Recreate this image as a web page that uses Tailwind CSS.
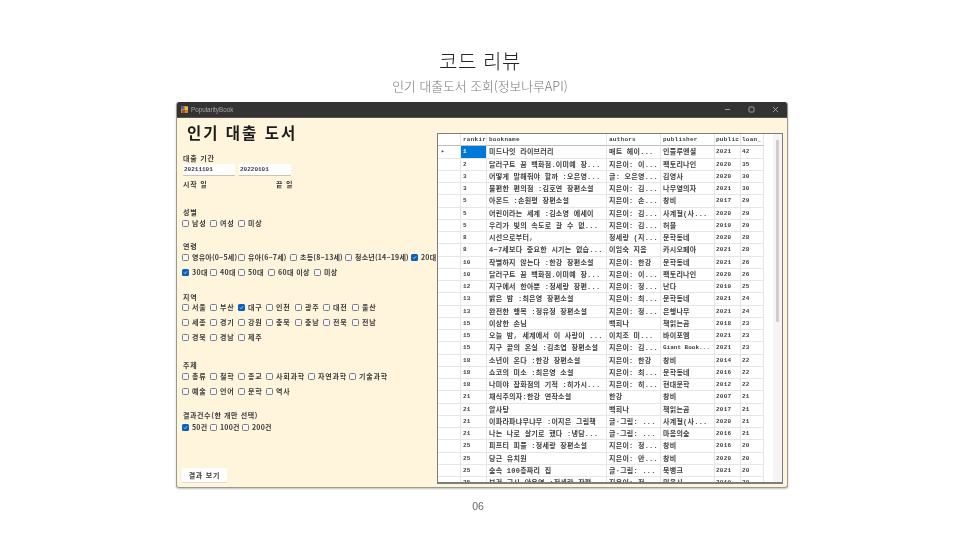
<!doctype html>
<html lang="ko">
<head>
<meta charset="utf-8">
<script src="https://cdn.jsdelivr.net/npm/@tailwindcss/browser@4"></script>
</head>
<body class="m-0 bg-white">
<div class="w-[960px] h-[540px] overflow-hidden flex flex-col items-center font-['Noto_Sans_CJK_KR','Liberation_Sans',sans-serif]">
  <h1 class="mt-[47px] h-[27px] leading-[27px] text-[20px] font-light text-[#222] tracking-[0.6px] opacity-[0.99]">코드 리뷰</h1>
  <p class="mt-[3px] h-[18px] leading-[18px] text-[12.8px] font-light text-[#777] opacity-[0.99]">인기 대출도서 조회(정보나루API)</p>

  <div class="mt-[7px] self-start ml-[176px] w-[612px] h-[386px] shrink-0 rounded-[3px] border border-[#9a9a8e] border-t-0 bg-[#fff5dc] overflow-hidden flex flex-col blur-[0.4px] shadow-[0_1px_2px_rgba(0,0,0,0.25)]">
    <!-- title bar -->
    <div class="h-[16px] shrink-0 bg-[#333333] border-b border-[#555] flex items-center text-[6.3px] text-[#a8a8a8] font-['Liberation_Sans',sans-serif]">
      <svg class="ml-[4px] mr-[3px]" width="7" height="7" viewBox="0 0 7 7"><rect width="7" height="7" fill="#c98a2a"/><rect x="0" y="0" width="3" height="3" fill="#3f6fb5"/><rect x="4" y="1" width="3" height="3" fill="#e8c040"/><rect x="1" y="4" width="3" height="3" fill="#b8482c"/></svg>
      <span>PopularityBook</span>
      <span class="ml-auto flex items-center gap-[17px] mr-[8px]">
        <svg width="7" height="7" viewBox="0 0 7 7"><path d="M1 3.5h5" stroke="#b5b5b5" stroke-width="0.8"/></svg>
        <svg width="7" height="7" viewBox="0 0 7 7"><rect x="1" y="1" width="5" height="5" rx="0.6" fill="none" stroke="#b5b5b5" stroke-width="0.8"/></svg>
        <svg width="7" height="7" viewBox="0 0 7 7"><path d="M1 1l5 5M6 1l-5 5" stroke="#b5b5b5" stroke-width="0.8"/></svg>
      </span>
    </div>

    <div class="flex-1 flex min-h-0">
      <!-- left form -->
      <div class="w-[260px] shrink-0 pl-[5px] flex flex-col whitespace-nowrap text-[#3a3a3a] text-[7px] leading-[10px] tracking-[0.8px] font-bold [&>div]:shrink-0 [&>div]:h-[10px] [&>div]:flex [&>div]:items-center [&_span]:shrink-0 [&_i]:shrink-0 [&_i]:w-[7px] [&_i]:h-[7px] [&_i]:mr-[3px] [&_i]:rounded-[1.5px] [&_i]:border-[0.8px] [&_i]:border-[#7c7c7c] [&_i]:bg-[#f7f7f7] [&_b]:shrink-0 [&_b]:w-[7px] [&_b]:h-[7px] [&_b]:mr-[3px] [&_b]:rounded-[1.5px] [&_b]:bg-[#0a62b8] [&_b]:flex [&_b]:items-center [&_b]:justify-center">
        <h2 class="mt-[5px] ml-[5px] h-[19px] leading-[19px] text-[15.5px] font-bold text-[#1c1c1c] tracking-[2px]">인기 대출 도서</h2>
        <div class="mt-[11px] pl-[1px]">대출 기간</div>
        <div class="mt-[1px] !h-[12px] pl-[1px] gap-[4px] font-['Liberation_Mono',monospace] text-[6px] tracking-[0] font-bold">
          <span class="w-[52px] h-[12px] bg-white border-b border-[#c9c4b4] pl-[1px] leading-[11px]">20211101</span>
          <span class="w-[52px] h-[12px] bg-white border-b border-[#c9c4b4] pl-[1px] leading-[11px]">20220101</span>
        </div>
        <div class="mt-[3px] pl-[1px]"><span class="w-[93px]">시작 일</span><span>끝 일</span></div>

        <div class="mt-[18px] pl-[1px]">성별</div>
        <div class="mt-[1px]">
          <span class="w-[28px] flex items-center"><i></i>남성</span><span class="w-[28px] flex items-center"><i></i>여성</span><span class="flex items-center"><i></i>미상</span>
        </div>

        <div class="mt-[13px] pl-[1px]">연령</div>
        <div class="mt-[1px] tracking-[0.2px]">
          <span class="w-[56px] flex items-center overflow-hidden"><i></i>영유아(0~5세)</span><span class="w-[52px] flex items-center overflow-hidden"><i></i>유아(6~7세)</span><span class="w-[55px] flex items-center overflow-hidden"><i></i>초등(8~13세)</span><span class="w-[66px] flex items-center overflow-hidden"><i></i>청소년(14~19세)</span><span class="flex items-center"><b><svg width="5" height="5" viewBox="0 0 5 5"><path d="M1 2.6l1 1 2-2.2" fill="none" stroke="#fff" stroke-width="0.7"/></svg></b>20대</span>
        </div>
        <div class="mt-[5px] tracking-[0.4px]">
          <span class="w-[28px] flex items-center"><b><svg width="5" height="5" viewBox="0 0 5 5"><path d="M1 2.6l1 1 2-2.2" fill="none" stroke="#fff" stroke-width="0.7"/></svg></b>30대</span><span class="w-[28px] flex items-center"><i></i>40대</span><span class="w-[30px] flex items-center"><i></i>50대</span><span class="w-[46px] flex items-center"><i></i>60대 이상</span><span class="flex items-center"><i></i>미상</span>
        </div>

        <div class="mt-[15px] pl-[1px]">지역</div>
        <div>
          <span class="w-[28px] flex items-center"><i></i>서울</span><span class="w-[28px] flex items-center"><i></i>부산</span><span class="w-[28px] flex items-center"><b><svg width="5" height="5" viewBox="0 0 5 5"><path d="M1 2.6l1 1 2-2.2" fill="none" stroke="#fff" stroke-width="0.7"/></svg></b>대구</span><span class="w-[29px] flex items-center"><i></i>인천</span><span class="w-[28px] flex items-center"><i></i>광주</span><span class="w-[29px] flex items-center"><i></i>대전</span><span class="flex items-center"><i></i>울산</span>
        </div>
        <div class="mt-[5px]">
          <span class="w-[28px] flex items-center"><i></i>세종</span><span class="w-[28px] flex items-center"><i></i>경기</span><span class="w-[28px] flex items-center"><i></i>강원</span><span class="w-[29px] flex items-center"><i></i>충북</span><span class="w-[28px] flex items-center"><i></i>충남</span><span class="w-[29px] flex items-center"><i></i>전북</span><span class="flex items-center"><i></i>전남</span>
        </div>
        <div class="mt-[5px]">
          <span class="w-[28px] flex items-center"><i></i>경북</span><span class="w-[28px] flex items-center"><i></i>경남</span><span class="flex items-center"><i></i>제주</span>
        </div>

        <div class="mt-[18px] pl-[1px]">주제</div>
        <div class="mt-[1px]">
          <span class="w-[28px] flex items-center"><i></i>총류</span><span class="w-[28px] flex items-center"><i></i>철학</span><span class="w-[28px] flex items-center"><i></i>종교</span><span class="w-[42px] flex items-center"><i></i>사회과학</span><span class="w-[41px] flex items-center"><i></i>자연과학</span><span class="flex items-center"><i></i>기술과학</span>
        </div>
        <div class="mt-[5px]">
          <span class="w-[28px] flex items-center"><i></i>예술</span><span class="w-[28px] flex items-center"><i></i>언어</span><span class="w-[28px] flex items-center"><i></i>문학</span><span class="flex items-center"><i></i>역사</span>
        </div>

        <div class="mt-[14px] pl-[1px] tracking-[0.6px]">결과건수(한 개만 선택)</div>
        <div class="mt-[2px] tracking-[0.2px]">
          <span class="w-[28px] flex items-center"><b><svg width="5" height="5" viewBox="0 0 5 5"><path d="M1 2.6l1 1 2-2.2" fill="none" stroke="#fff" stroke-width="0.7"/></svg></b>50건</span><span class="w-[32px] flex items-center"><i></i>100건</span><span class="flex items-center"><i></i>200건</span>
        </div>

        <button class="mt-[36px] w-[45px] h-[15px] shrink-0 bg-white rounded-[1px] border-b border-[#e0dccc] text-[7px] font-bold text-[#3a3a3a] tracking-[0.8px]">결과 보기</button>
      </div>

      <!-- table -->
      <div class="mt-[15px] mb-[3px] w-[346px] shrink-0 bg-white border border-[#7d7d7d] border-b-2 flex overflow-hidden">
        <div class="w-[326px] shrink-0 grid grid-cols-[23px_26px_120px_54px_54px_26px_23px] auto-rows-[12.25px] font-['Liberation_Mono','Noto_Sans_CJK_KR',monospace] text-[7px] leading-[12px] tracking-[0.25px] text-[#404040] font-bold [&>div]:px-[2px] [&>div]:whitespace-nowrap [&>div]:overflow-hidden [&>div]:border-r [&>div]:border-b [&>div]:border-[#e6e6e6] [&>div:nth-child(7n+1)]:px-0 [&>div:nth-child(7n+2)]:text-[6px] [&>div:nth-child(7n+6)]:text-[6px] [&>div:nth-child(7n+7)]:text-[6px] [&>div:nth-child(7n+6)]:pl-[1px] [&>div:nth-child(7n+7)]:pl-[1px] [&>div:nth-child(-n+7)]:text-[6px] [&>div:nth-child(-n+7)]:border-b-[#bdbdbd]">
          <div></div><div>rankir</div><div>bookname</div><div>authors</div><div>publisher</div><div>public</div><div>loan_</div>
          <div class="!pl-[3px] !text-[6px]">▸</div><div class="!bg-[#0078d7] !text-white">1</div><div>미드나잇 라이브러리</div><div>매트 헤이...</div><div>인플루엔셜</div><div>2021</div><div>42</div>
          <div></div><div>2</div><div>달러구트 꿈 백화점.이미예 장...</div><div>지은이: 이...</div><div>팩토리나인</div><div>2020</div><div>35</div>
          <div></div><div>3</div><div>어떻게 말해줘야 할까 :오은영...</div><div>글: 오은영...</div><div>김영사</div><div>2020</div><div>30</div>
          <div></div><div>3</div><div>불편한 편의점 :김호연 장편소설</div><div>지은이: 김...</div><div>나무옆의자</div><div>2021</div><div>30</div>
          <div></div><div>5</div><div>아몬드 :손원평 장편소설</div><div>지은이: 손...</div><div>창비</div><div>2017</div><div>29</div>
          <div></div><div>5</div><div>어린이라는 세계 :김소영 에세이</div><div>지은이: 김...</div><div>사계절(사...</div><div>2020</div><div>29</div>
          <div></div><div>5</div><div>우리가 빛의 속도로 갈 수 없...</div><div>지은이: 김...</div><div>허블</div><div>2019</div><div>29</div>
          <div></div><div>8</div><div>시선으로부터,</div><div>정세랑 (지...</div><div>문학동네</div><div>2020</div><div>28</div>
          <div></div><div>8</div><div>4~7세보다 중요한 시기는 없습...</div><div>이임숙 지음</div><div>카시오페아</div><div>2021</div><div>28</div>
          <div></div><div>10</div><div>작별하지 않는다 :한강 장편소설</div><div>지은이: 한강</div><div>문학동네</div><div>2021</div><div>26</div>
          <div></div><div>10</div><div>달러구트 꿈 백화점.이미예 장...</div><div>지은이: 이...</div><div>팩토리나인</div><div>2020</div><div>26</div>
          <div></div><div>12</div><div>지구에서 한아뿐 :정세랑 장편...</div><div>지은이: 정...</div><div>난다</div><div>2019</div><div>25</div>
          <div></div><div>13</div><div>밝은 밤 :최은영 장편소설</div><div>지은이: 최...</div><div>문학동네</div><div>2021</div><div>24</div>
          <div></div><div>13</div><div>완전한 행복 :정유정 장편소설</div><div>지은이: 정...</div><div>은행나무</div><div>2021</div><div>24</div>
          <div></div><div>15</div><div>이상한 손님</div><div>백희나</div><div>책읽는곰</div><div>2018</div><div>23</div>
          <div></div><div>15</div><div>오늘 밤, 세계에서 이 사랑이 ...</div><div>이치조 미...</div><div>바이포엠</div><div>2021</div><div>23</div>
          <div></div><div>15</div><div>지구 끝의 온실 :김초엽 장편소설</div><div>지은이: 김...</div><div class="!text-[6px] !tracking-[0]">Giant Book...</div><div>2021</div><div>23</div>
          <div></div><div>18</div><div>소년이 온다 :한강 장편소설</div><div>지은이: 한강</div><div>창비</div><div>2014</div><div>22</div>
          <div></div><div>18</div><div>쇼코의 미소 :최은영 소설</div><div>지은이: 최...</div><div>문학동네</div><div>2016</div><div>22</div>
          <div></div><div>18</div><div>나미야 잡화점의 기적 :히가시...</div><div>지은이: 히...</div><div>현대문학</div><div>2012</div><div>22</div>
          <div></div><div>21</div><div>채식주의자:한강 연작소설</div><div>한강</div><div>창비</div><div>2007</div><div>21</div>
          <div></div><div>21</div><div>알사탕</div><div>백희나</div><div>책읽는곰</div><div>2017</div><div>21</div>
          <div></div><div>21</div><div>이파라파냐무냐무 :이지은 그림책</div><div>글·그림: ...</div><div>사계절(사...</div><div>2020</div><div>21</div>
          <div></div><div>21</div><div>나는 나로 살기로 했다 :냉담...</div><div>글·그림: ...</div><div>마음의숲</div><div>2016</div><div>21</div>
          <div></div><div>25</div><div>피프티 피플 :정세랑 장편소설</div><div>지은이: 정...</div><div>창비</div><div>2016</div><div>20</div>
          <div></div><div>25</div><div>당근 유치원</div><div>지은이: 안...</div><div>창비</div><div>2020</div><div>20</div>
          <div></div><div>25</div><div>숲속 100층짜리 집</div><div>글·그림: ...</div><div>북뱅크</div><div>2021</div><div>20</div>
          <div></div><div>25</div><div>보건 교사 안은영 :정세랑 장편</div><div>지은이: 정...</div><div>민음사</div><div>2019</div><div>20</div>
        </div>
        <div class="ml-auto w-[9px] shrink-0 bg-[#f4f4f4] pt-[6px] flex justify-center">
          <div class="w-[3px] h-[182px] bg-[#cdcdcd] rounded-[1px]"></div>
        </div>
      </div>
    </div>
  </div>

  <p class="mt-[11px] -ml-[4px] h-[14px] leading-[14px] text-[10.5px] text-[#666] opacity-[0.99] font-['Liberation_Sans',sans-serif]">06</p>
</div>
</body>
</html>
